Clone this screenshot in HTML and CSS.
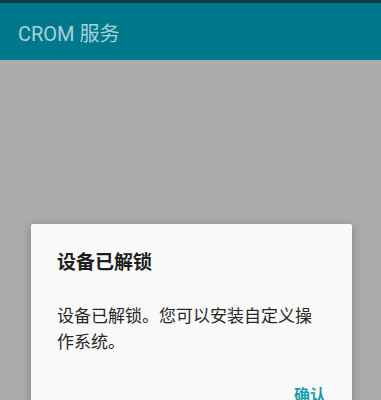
FILE: index.html
```html
<!DOCTYPE html>
<html lang="zh-CN">
<head>
    <meta charset="UTF-8">
    <meta name="viewport" content="width=device-width, initial-scale=1.0">
    <title>CROM 服务</title>
    <link rel="stylesheet" href="styles.css">
</head>
<body>
    <div class="status-bar"></div>
    <header class="app-bar">
        <h1>CROM 服务</h1>
    </header>
    <main class="content">
        <div class="dialog">
            <h2>设备已解锁</h2>
            <p>设备已解锁。您可以安装自定义操作系统。</p>
            <div class="dialog-actions">
                <button type="button">确认</button>
            </div>
        </div>
    </main>
</body>
</html>
```

FILE: styles.css
```css
html, body {
    height: 100%;
}

body {
    margin: 0;
    padding: 0;
    font-family: Roboto, "Noto Sans CJK SC", sans-serif;
    background-color: #ababab;
    display: flex;
    flex-direction: column;
    overflow: hidden;
}

.status-bar {
    flex-shrink: 0;
    height: 3px;
    background-color: #0e3b47;
}

.app-bar {
    flex-shrink: 0;
    height: 57px;
    background-color: #00788b;
    display: flex;
    align-items: center;
    padding: 0 18px;
}

.app-bar h1 {
    margin: 0;
    font-size: 20px;
    font-weight: 400;
    color: #a6d3d9;
    position: relative;
    top: 1px;
}

.content {
    flex: 1;
    min-height: 0;
    padding: 164px 29px 0 31px;
}

.dialog {
    background-color: #fafafa;
    border-radius: 2px;
    box-shadow: 0 2px 8px rgba(0, 0, 0, 0.25);
    padding: 26px 26px 0 26px;
}

.dialog h2 {
    margin: 0;
    font-size: 19px;
    line-height: 26px;
    font-weight: 700;
    color: #1e1e1e;
}

.dialog p {
    margin: 27px 0 0 0;
    font-size: 17px;
    line-height: 26px;
    color: #262626;
}

.dialog-actions {
    display: flex;
    justify-content: flex-end;
    padding-top: 19px;
}

.dialog-actions button {
    background: none;
    border: none;
    padding: 8px 0;
    margin-right: 0;
    font-family: inherit;
    font-size: 16px;
    font-weight: 700;
    color: #1c9cb1;
}
```
